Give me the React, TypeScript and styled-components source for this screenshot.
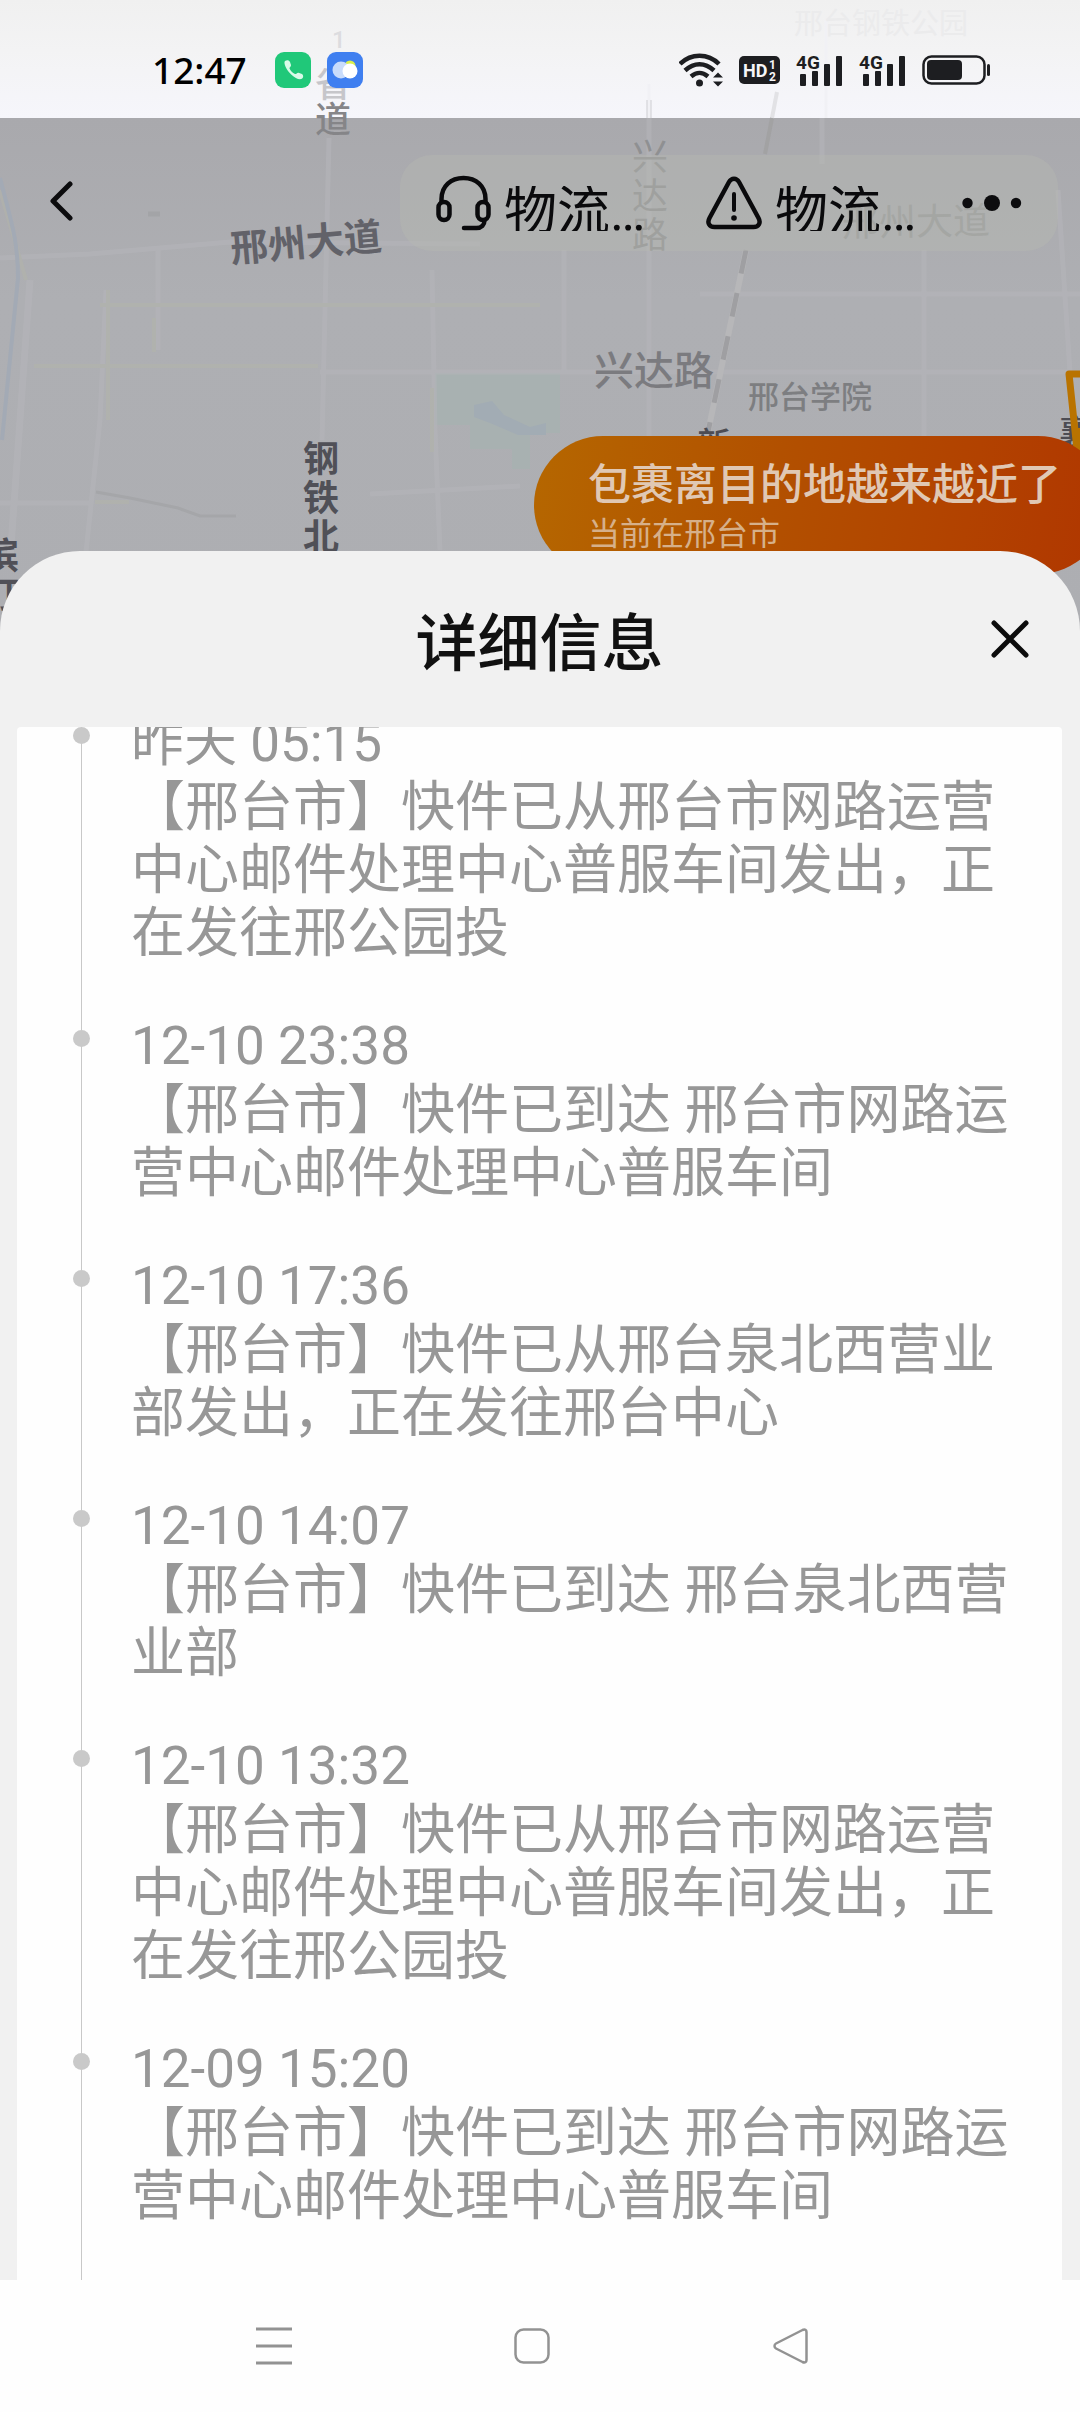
import React, { useLayoutEffect, useRef } from "react";
import styled, { createGlobalStyle } from "styled-components";

const GlobalStyle = createGlobalStyle`
  *, *::before, *::after { box-sizing: border-box; }
  body {
    margin: 0;
    background: #fefefe;
    font-family: Roboto, "Noto Sans CJK SC", sans-serif;
    text-spacing-trim: space-all;
  }
  button {
    margin: 0;
    padding: 0;
    border: 0;
    background: none;
    color: inherit;
    font: inherit;
  }
  svg { display: block; flex: none; }
`;

const Screen = styled.div`
  position: relative;
  display: flex;
  flex-direction: column;
  height: 100vh;
  overflow: hidden;
`;

/* ---------- map ---------- */

const MapCanvas = styled.div`
  position: absolute;
  inset: 0 0 auto 0;
  height: 640px;
  overflow: hidden;
  background: linear-gradient(
    #f0f0f0 0,
    #f3f3f4 50px,
    #f6f6fb 118px,
    #a9a9ad 118px,
    #aeafb3 300px,
    #adaeb2 100%
  );
`;

const RoadLayer = styled.svg`
  position: absolute;
  top: 0;
  left: 0;
`;

const MapLabel = styled.span<{
  $x: number;
  $y: number;
  $size?: number;
  $color?: string;
  $tilt?: number;
  $vertical?: boolean;
  $weight?: number;
}>`
  position: absolute;
  left: ${(p) => p.$x}px;
  top: ${(p) => p.$y}px;
  width: ${(p) => (p.$vertical ? "1em" : "auto")};
  color: ${(p) => p.$color ?? "#4c4c53"};
  font-size: ${(p) => p.$size ?? 36}px;
  font-weight: ${(p) => p.$weight ?? 500};
  line-height: ${(p) => (p.$vertical ? "39px" : "1")};
  white-space: ${(p) => (p.$vertical ? "normal" : "nowrap")};
  word-break: break-all;
  transform: rotate(${(p) => p.$tilt ?? 0}deg);
`;

const Bubble = styled.div`
  position: absolute;
  left: 534px;
  top: 436px;
  padding: 24px 46px 16px 54px;
  border-radius: 70px;
  background: linear-gradient(100deg, #b56700 0%, #b25000 42%, #b24200 75%, #b03600 100%);
  white-space: nowrap;
`;

const BubbleTitle = styled.div`
  color: #e0c8b4;
  font-size: 43px;
  font-weight: 500;
  line-height: 50px;
`;

const BubbleNote = styled.div`
  color: #d6b08a;
  font-size: 32px;
  line-height: 48px;
`;

/* ---------- status bar ---------- */

const StatusBar = styled.div`
  position: relative;
  display: flex;
  flex: none;
  align-items: center;
  height: 118px;
  padding: 21px 90px 0 152px;
  color: #000;
`;

const Clock = styled.time`
  margin-right: 28px;
  font-family: "Noto Sans", sans-serif;
  font-size: 37px;
  font-weight: 500;
  line-height: 48px;
`;

const NoticeIcons = styled.div`
  display: flex;
  gap: 16px;
`;

const SignalIcons = styled.div`
  display: flex;
  align-items: center;
  gap: 16px;
  margin-left: auto;
`;

const IconText = styled.text<{ $size: number }>`
  font-family: "Liberation Sans Narrow", Roboto, sans-serif;
  font-size: ${(p) => p.$size}px;
  font-weight: 700;
`;

/* ---------- toolbar ---------- */

const Toolbar = styled.header`
  position: relative;
  display: flex;
  flex: none;
  align-items: flex-start;
  justify-content: space-between;
  height: 433px;
  padding: 37px 22px 0 40px;
`;

const BackButton = styled.button`
  display: grid;
  place-items: center;
  width: 44px;
  height: 92px;
`;

const ActionGroup = styled.div`
  display: flex;
  align-items: center;
  height: 96px;
  padding: 0 36px;
  border-radius: 32px;
  background: rgba(182, 184, 177, 0.4);
`;

const ActionButton = styled.button`
  display: flex;
  align-items: center;
  gap: 13px;
  width: 256px;
  color: #0a0a0c;

  & + & {
    margin-left: 14px;
  }
`;

const ActionLabel = styled.span`
  height: 45px;
  overflow: hidden;
  margin-top: 10px;
  font-size: 53px;
  line-height: 53px;
`;

const MoreButton = styled.button`
  display: grid;
  place-items: center;
  width: 60px;
`;

/* ---------- sheet ---------- */

const Sheet = styled.section`
  position: relative;
  display: flex;
  flex: 1;
  flex-direction: column;
  min-height: 0;
  padding: 0 18px 0 17px;
  border-radius: 80px 80px 0 0;
  background: #f1f1f1;
`;

const SheetHeader = styled.div`
  display: grid;
  flex: none;
  grid-template-columns: 60px 1fr 60px;
  align-items: center;
  height: 176px;
  padding: 0 22px;
`;

const SheetTitle = styled.h1`
  grid-column: 2;
  margin: 0;
  padding-top: 12px;
  color: #111;
  font-size: 62px;
  font-weight: 500;
  line-height: 80px;
  text-align: center;
`;

const CloseButton = styled.button`
  display: grid;
  place-items: center;
  height: 60px;
`;

const Timeline = styled.ol`
  flex: 1;
  min-height: 0;
  margin: 0;
  padding: 0;
  overflow-y: auto;
  border-radius: 4px 4px 0 0;
  background: #fefefe;
  list-style: none;
  scrollbar-width: none;
`;

const Entry = styled.li`
  display: grid;
  grid-template-columns: 17px 1fr;
  column-gap: 41px;
  padding: 0 32px 0 56px;
`;

const Rail = styled.div`
  display: flex;
  justify-content: center;
  background: linear-gradient(#c8c8c8, #c8c8c8) center / 1px 100% no-repeat;
`;

const Dot = styled.span`
  width: 17px;
  height: 17px;
  margin-top: 16px;
  border-radius: 50%;
  background: #c9c9c9;
`;

const EntryBody = styled.div`
  padding-bottom: 49px;
  color: #979797;

  ${Entry}:last-child & {
    padding-bottom: 96px;
  }
`;

const EntryTime = styled.time`
  display: block;
  font-size: 53px;
  line-height: 65px;
`;

const EntryText = styled.p`
  margin: 0;
  font-size: 54px;
  line-height: 63px;
`;

/* ---------- navigation bar ---------- */

const NavBar = styled.nav`
  position: relative;
  display: grid;
  flex: none;
  grid-template-columns: repeat(3, 1fr);
  height: 132px;
  padding: 0 161px 0 145px;
  background: #fefefe;
  color: #929292;
`;

const NavButton = styled.button`
  display: grid;
  place-items: center;
`;

const entries = [
  { time: "昨天 05:15", text: "【邢台市】快件已从邢台市网路运营中心邮件处理中心普服车间发出，正在发往邢公园投" },
  { time: "12-10 23:38", text: "【邢台市】快件已到达 邢台市网路运营中心邮件处理中心普服车间" },
  { time: "12-10 17:36", text: "【邢台市】快件已从邢台泉北西营业部发出，正在发往邢台中心" },
  { time: "12-10 14:07", text: "【邢台市】快件已到达 邢台泉北西营业部" },
  { time: "12-10 13:32", text: "【邢台市】快件已从邢台市网路运营中心邮件处理中心普服车间发出，正在发往邢公园投" },
  { time: "12-09 15:20", text: "【邢台市】快件已到达 邢台市网路运营中心邮件处理中心普服车间" },
];

function Roads() {
  return (
    <RoadLayer width="1080" height="640" fill="none" aria-hidden="true">
      <path d="M435 373h125v60h-30v36h-18v-20h-42v-24h-35z" fill="#a8b1b1" />
      <path d="M474 405l18-4 12 14 26 12 16-4v12h-28l-28-12-16-6z" fill="#a2acb4" />
      <g opacity="0.6">
        <g stroke="#b5b5ba" strokeWidth="5">
          <path d="M329 138L322 440M158 250v100M106 290l-6 130-14 132M432 270l3 160 5 120" />
          <path d="M649 100v350M564 250v120M924 250v186M1058 190l12 182M822 118v46" />
          <path d="M0 258l90-4 140-12 250 2M320 372h748M0 503h90M370 494l150-8M700 294h380" />
          <path d="M30 280L10 560" strokeWidth="7" />
        </g>
        <g stroke="#b2b4ab" strokeWidth="4">
          <path d="M100 305h440M34 366h284M108 290v130M154 318v34M432 388v64M95 502h34" />
          <path d="M0 190l26 90" />
        </g>
      </g>
      <path d="M0 178c10 40 18 60 18 100L2 440" stroke="#a3aab5" strokeWidth="4" />
      <path d="M649 84v34M826 20v98" stroke="#f1f1f5" strokeWidth="3" />
      <path d="M777 92l-5 26" stroke="#e2e2e5" strokeWidth="4" />
      <path d="M96 492l34 6 48 10 22 8h36" stroke="#a5a6a9" strokeWidth="3" />
      <path d="M772 118l-7 36" stroke="#a2a2a3" strokeWidth="4" />
      <path d="M746 250l-38 182" stroke="#b7b7b9" strokeWidth="6" />
      <path d="M746 250l-38 182" stroke="#9f9fa2" strokeWidth="5" strokeDasharray="24 20" />
      <path d="M148 214h12" stroke="#a3a4a7" strokeWidth="5" />
    </RoadLayer>
  );
}

function RouteOutline() {
  return (
    <RoadLayer width="1080" height="640" fill="none" aria-hidden="true">
      <path d="M1090 374h-21l8 76" stroke="#b97300" strokeWidth="7" strokeLinejoin="round" />
      <path d="M1076 428l8 0v24h-6z" fill="#b97300" />
    </RoadLayer>
  );
}

function SignalIcon() {
  return (
    <svg width="47" height="34" viewBox="0 0 47 34" fill="#1d1e21" aria-hidden="true">
      <rect x="4" y="21" width="6" height="12" rx="1" />
      <rect x="16" y="18" width="6" height="15" rx="1" />
      <rect x="28" y="11" width="6" height="22" rx="1" />
      <rect x="40" y="3" width="6" height="30" rx="1" />
      <IconText x="0" y="16" $size={19}>4G</IconText>
    </svg>
  );
}

export default function App() {
  const listRef = useRef<HTMLOListElement>(null);

  useLayoutEffect(() => {
    if (listRef.current) listRef.current.scrollTop = 16;
  }, []);

  return (
    <>
      <GlobalStyle />
      <Screen>
        <MapCanvas>
          <Roads />
          <MapLabel $x={332} $y={28} $size={24} $color="#dcdcdf">1</MapLabel>
          <MapLabel $x={315} $y={67} $color="#c6c6ca">省</MapLabel>
          <MapLabel $x={315} $y={103} $color="#858588">道</MapLabel>
          <MapLabel $x={794} $y={10} $size={29} $color="#ebebec" $weight={400}>邢台钢铁公园</MapLabel>
          <MapLabel $x={230} $y={224} $size={38} $color="#626269" $tilt={-5} $weight={700}>邢州大道</MapLabel>
          <MapLabel $x={632} $y={139} $color="#8f9092" $weight={400} $vertical>兴达路</MapLabel>
          <MapLabel $x={842} $y={204} $size={37} $color="#98999a" $weight={400} $tilt={-1}>邢州大道</MapLabel>
          <MapLabel $x={594} $y={352} $size={40} $color="#7b7b7f">兴达路</MapLabel>
          <MapLabel $x={748} $y={382} $size={31} $color="#7d7e81">邢台学院</MapLabel>
          <MapLabel $x={697} $y={428} $size={34}>新</MapLabel>
          <MapLabel $x={303} $y={441} $color="#505057" $weight={700} $vertical>钢铁北路</MapLabel>
          <MapLabel $x={-17} $y={538} $color="#505057" $weight={700} $vertical>滨汀</MapLabel>
          <MapLabel $x={1059} $y={416} $size={34}>襄</MapLabel>
          <RouteOutline />
          <Bubble>
            <BubbleTitle>包裹离目的地越来越近了</BubbleTitle>
            <BubbleNote>当前在邢台市</BubbleNote>
          </Bubble>
        </MapCanvas>

        <StatusBar>
          <Clock>12:47</Clock>
          <NoticeIcons>
            <svg width="36" height="36" viewBox="0 0 36 36" aria-hidden="true">
              <rect width="36" height="36" rx="9" fill="#20c879" />
              <path d="M10 9c2-1.500 4-1 5 1l1 3c.4 1.500-2 2.500-1.500 3.500 1.200 2.600 3 4.400 5.500 5.500 1.200.5 2-1.700 3.500-1.300l3.500 1.300c1.600.8 1.500 3.500.2 4.600-2.200 1.700-6.500.4-11-4S8 11 10 9z" fill="#d9fbe9" />
            </svg>
            <svg width="36" height="36" viewBox="0 0 36 36" aria-hidden="true">
              <rect width="36" height="36" rx="9" fill="#3f7ff0" />
              <circle cx="23" cy="14" r="5.500" fill="#d9ee4e" />
              <circle cx="14" cy="18" r="8.500" fill="#c9dcfb" />
              <circle cx="23" cy="19" r="7.500" fill="#fff" />
            </svg>
          </NoticeIcons>
          <SignalIcons>
            <svg width="44" height="34" viewBox="0 0 44 34" fill="none" stroke="#1d1e21" aria-hidden="true">
              <path d="M1 11C12 0 29 0 40 11" strokeWidth="4.500" />
              <path d="M6 17.500C15 9 26 9 35 17.500" strokeWidth="4.500" />
              <path d="M12 23.500c6-5 11-5 17 0" strokeWidth="4.500" />
              <circle cx="20.500" cy="30" r="3.500" fill="#1d1e21" stroke="none" />
              <path d="M34 24.500l5-5 5 5zM34 28.500l5 5 5-5z" fill="#1d1e21" stroke="none" />
            </svg>
            <svg width="41" height="28" viewBox="0 0 41 28" aria-hidden="true">
              <rect width="41" height="28" rx="5" fill="#1d1e21" />
              <g fill="#f6f6f8">
                <IconText x="4" y="21" $size={18}>HD</IconText>
                <IconText x="30" y="13" $size={12}>1</IconText>
                <IconText x="30" y="25" $size={12}>2</IconText>
              </g>
            </svg>
            <SignalIcon />
            <SignalIcon />
            <svg width="68" height="30" viewBox="0 0 68 30" aria-hidden="true">
              <rect x="1.500" y="1.500" width="61" height="27" rx="8" fill="none" stroke="#1d1e21" strokeWidth="2.500" />
              <rect x="5" y="5" width="35" height="20" rx="4" fill="#1d1e21" />
              <rect x="65" y="9" width="3" height="12" rx="1.500" fill="#1d1e21" />
            </svg>
          </SignalIcons>
        </StatusBar>

        <Toolbar>
          <BackButton aria-label="返回">
            <svg width="24" height="40" viewBox="0 0 24 40" fill="none" stroke="#0c0c0e" strokeWidth="5" strokeLinecap="round" strokeLinejoin="round" aria-hidden="true">
              <path d="M20 3L3 20l17 17" />
            </svg>
          </BackButton>
          <ActionGroup>
            <ActionButton>
              <svg width="55" height="56" viewBox="0 0 55 56" fill="none" stroke="currentColor" strokeWidth="4.500" strokeLinecap="round" aria-hidden="true">
                <path d="M5.500 27v-3C5.500 11 15 3 27.500 3S49.500 11 49.500 24v3" />
                <rect x="2.500" y="27" width="11" height="18" rx="5.500" />
                <rect x="41.500" y="27" width="11" height="18" rx="5.500" />
                <path d="M48.500 45c0 5-3 8-8 8H28" />
              </svg>
              <ActionLabel>物流…</ActionLabel>
            </ActionButton>
            <ActionButton>
              <svg width="56" height="54" viewBox="0 0 56 54" fill="none" stroke="currentColor" strokeWidth="4.500" strokeLinecap="round" strokeLinejoin="round" aria-hidden="true">
                <path d="M23 6c2.500-4.500 7.500-4.500 10 0l19.500 36c2.500 4.500.5 9-5 9h-39c-5.500 0-7.500-4.500-5-9z" />
                <path d="M28 18v16" strokeWidth="4" />
                <circle cx="28" cy="42" r="2.800" fill="currentColor" stroke="none" />
              </svg>
              <ActionLabel>物流…</ActionLabel>
            </ActionButton>
            <MoreButton aria-label="更多">
              <svg width="60" height="18" viewBox="0 0 60 18" fill="#0c0c0e" aria-hidden="true">
                <circle cx="5.500" cy="9" r="5.200" />
                <circle cx="30" cy="9" r="8" />
                <circle cx="54" cy="9" r="5.200" />
              </svg>
            </MoreButton>
          </ActionGroup>
        </Toolbar>

        <Sheet>
          <SheetHeader>
            <SheetTitle>详细信息</SheetTitle>
            <CloseButton aria-label="关闭">
              <svg width="40" height="40" viewBox="0 0 40 40" stroke="#0c0c0c" strokeWidth="5" strokeLinecap="round" aria-hidden="true">
                <path d="M4 4l32 32M36 4L4 36" />
              </svg>
            </CloseButton>
          </SheetHeader>
          <Timeline ref={listRef}>
            {entries.map((entry) => (
              <Entry key={entry.time}>
                <Rail>
                  <Dot />
                </Rail>
                <EntryBody>
                  <EntryTime>{entry.time}</EntryTime>
                  <EntryText>{entry.text}</EntryText>
                </EntryBody>
              </Entry>
            ))}
          </Timeline>
        </Sheet>

        <NavBar>
          <NavButton aria-label="最近任务">
            <svg width="36" height="38" viewBox="0 0 36 38" stroke="currentColor" strokeWidth="3" aria-hidden="true">
              <path d="M0 2h36M0 19h36M0 36h36" />
            </svg>
          </NavButton>
          <NavButton aria-label="主屏幕">
            <svg width="36" height="36" viewBox="0 0 36 36" fill="none" stroke="currentColor" strokeWidth="2.500" aria-hidden="true">
              <rect x="1.500" y="1.500" width="33" height="33" rx="8" />
            </svg>
          </NavButton>
          <NavButton aria-label="后退">
            <svg width="35" height="36" viewBox="0 0 35 36" fill="none" stroke="currentColor" strokeWidth="2.500" strokeLinejoin="round" aria-hidden="true">
              <path d="M29.500 2c2.500-1.200 4 0 4 2v28c0 2-1.500 3.200-4 2L3 20.500c-2-1-2-4 0-5z" />
            </svg>
          </NavButton>
        </NavBar>
      </Screen>
    </>
  );
}
